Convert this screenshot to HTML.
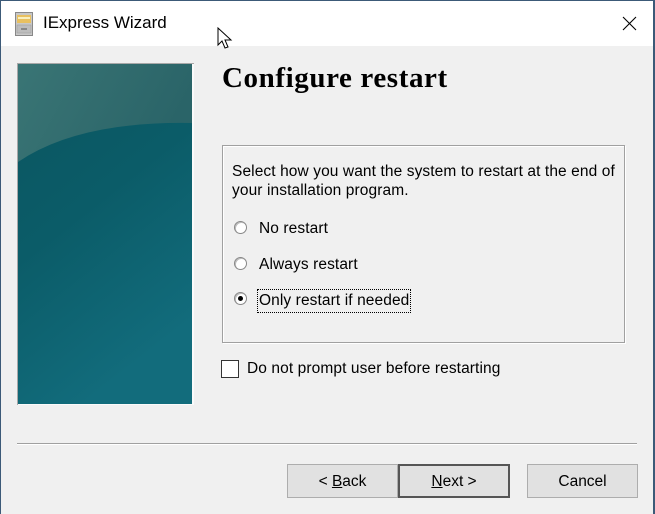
<!DOCTYPE html>
<html><head><style>
*{margin:0;padding:0;box-sizing:border-box}
body{width:655px;height:514px;overflow:hidden;background:#f0f0f0;font-family:"Liberation Sans",sans-serif;font-size:15px;color:#000;position:relative}
.frame{position:absolute;left:0;top:0;width:655px;height:514px;border-left:1px solid #3c5a78;border-right:2px solid #3c5a78;border-top:1px solid #3c5a78}
.title{position:absolute;left:1px;top:1px;width:652px;height:45px;background:#fff}
.abs{position:absolute}
.t{font-size:15.5px;letter-spacing:0.1px}
.btn{position:absolute;top:464px;height:34px;background:#e1e1e1;border:1px solid #adadad;text-align:center;line-height:33px;font-size:15.5px}
.radio{position:absolute;width:13px;height:13px;border-radius:50%;border:1px solid #888;background:#fff;box-shadow:inset 1px 1px 0 #bbb}
</style></head><body>
<div class="title"></div>
<svg class="abs" style="left:15px;top:12px" width="18" height="24" viewBox="0 0 18 24"><rect x="0.5" y="0.5" width="17" height="23" fill="#c8c8c8" stroke="#888"/><rect x="2" y="3" width="14" height="8" fill="#e8c060"/><rect x="3" y="5" width="12" height="2" fill="#f8f0c0"/><rect x="2" y="13" width="14" height="8" fill="#bdbdbd" stroke="#999" stroke-width="0.5"/><rect x="6" y="16" width="6" height="2" fill="#888"/></svg>
<div class="abs" style="left:43px;top:13px;font-size:17px">IExpress Wizard</div>
<svg class="abs" style="left:622px;top:16px" width="15" height="15"><path d="M1 1L14 14M14 1L1 14" stroke="#000" stroke-width="1.1"/></svg>
<svg class="abs" style="left:217px;top:27px" width="20" height="26"><path d="M1 1L1 18L5 14L8 21L11 20L8 13L14 13Z" fill="#fff" stroke="#000"/></svg>
<div class="abs" style="left:17px;top:63px;width:177px;height:342px;background:#fafafa;border-top:1px solid #a8a8a8;border-left:1px solid #a8a8a8"></div>
<svg class="abs" style="left:18px;top:64px" width="174" height="340"><defs><linearGradient id="g" x1="0" y1="0" x2="0.4" y2="1"><stop offset="0" stop-color="#0b5560"/><stop offset="0.5" stop-color="#0b5c68"/><stop offset="1" stop-color="#126c7c"/></linearGradient><linearGradient id="h" x1="0" y1="0" x2="1" y2="0.3"><stop offset="0" stop-color="#3a7575"/><stop offset="1" stop-color="#2a6468"/></linearGradient></defs><rect width="174" height="340" fill="url(#g)"/><path d="M0 0H174V59Q60 57 0 98Z" fill="url(#h)"/></svg>
<div class="abs" style="left:222px;top:62px;font-family:'Liberation Serif',serif;font-weight:bold;font-size:29px;letter-spacing:0.6px">Configure restart</div>
<div class="abs" style="left:222px;top:145px;width:403px;height:198px;border:1px solid #a0a0a0;box-shadow:inset 1px 1px 0 #fff,1px 1px 0 #fff"></div>
<div class="abs t" style="left:232px;top:162px;line-height:19px;width:395px">Select how you want the system to restart at the end of your installation program.</div>
<div class="radio" style="left:234px;top:221px"></div><div class="abs t" style="left:259px;top:220px">No restart</div>
<div class="radio" style="left:234px;top:257px"></div><div class="abs t" style="left:259px;top:256px">Always restart</div>
<div class="radio" style="left:234px;top:292px"><div style="position:absolute;left:3px;top:3px;width:5px;height:5px;border-radius:50%;background:#000"></div></div>
<div class="abs t" style="left:257px;top:289px;border:1px dotted #000;padding:0 1px;height:24px;line-height:22px">Only restart if needed</div>
<div class="abs" style="left:221px;top:360px;width:18px;height:18px;border:1px solid #333;background:#fff"></div>
<div class="abs t" style="left:247px;top:360px">Do not prompt user before restarting</div>
<div class="abs" style="left:17px;top:443px;width:620px;height:2px;border-top:1px solid #a0a0a0;border-bottom:1px solid #fff"></div>
<div class="btn" style="left:287px;width:111px">&lt; <u>B</u>ack</div>
<div class="btn" style="left:398px;width:112px;border:2px solid #555;line-height:31px"><u>N</u>ext &gt;</div>
<div class="btn" style="left:527px;width:111px">Cancel</div>
<div class="frame"></div>
</body></html>
